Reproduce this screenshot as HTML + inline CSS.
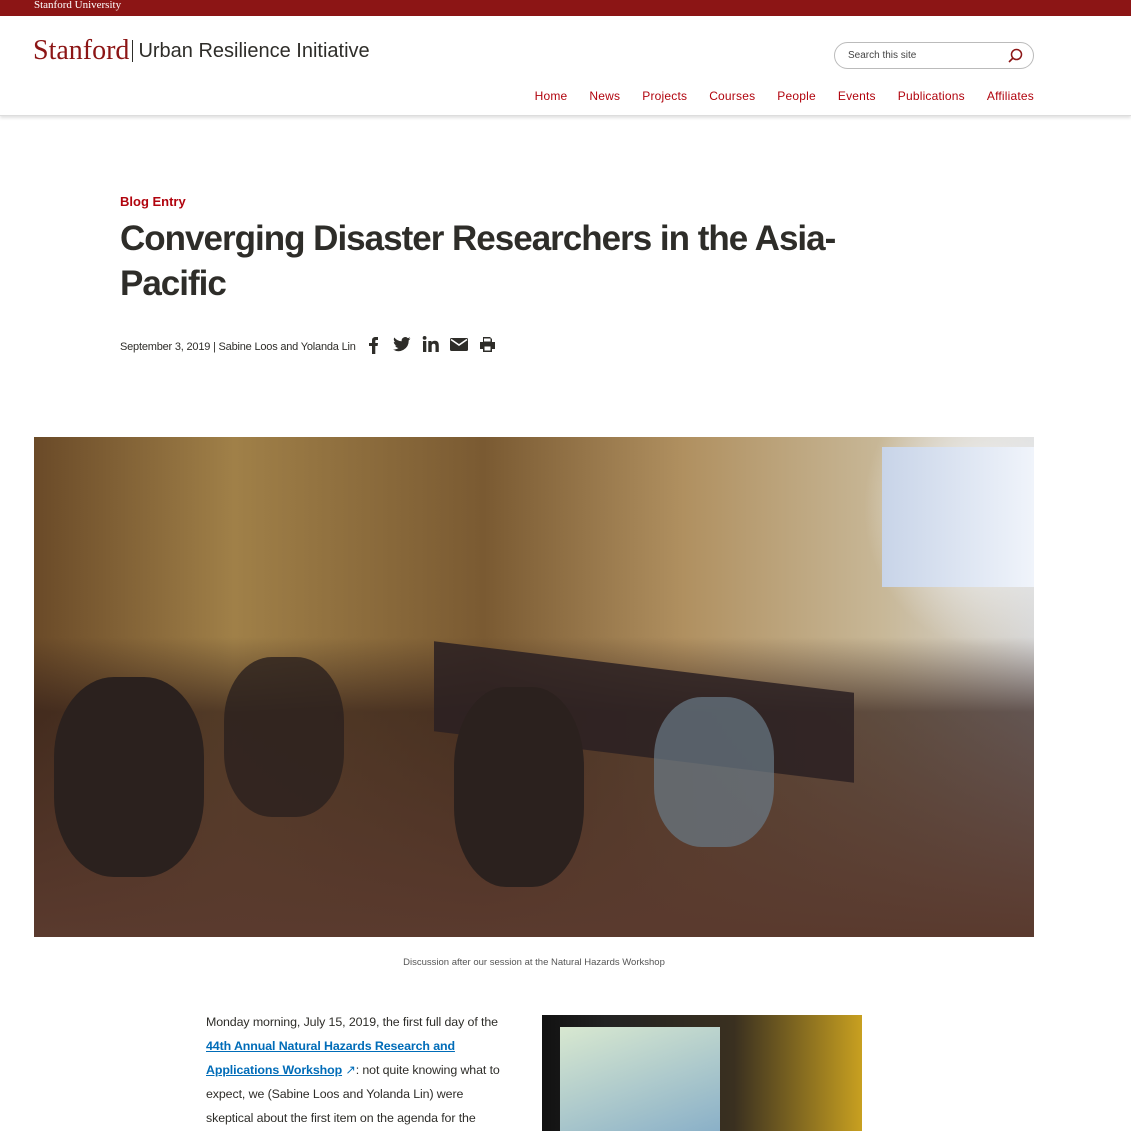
<!DOCTYPE html>
<html><head><meta charset="utf-8"><style>
*{margin:0;padding:0;box-sizing:border-box}
body{width:1131px;height:1131px;overflow:hidden;background:#fff;font-family:"Liberation Sans",sans-serif;color:#2e2d29}
.top{height:16px;background:#8c1515;color:#fff;font-family:"Liberation Serif",serif;font-size:11px;padding-left:34px;line-height:10px}
.hdr{height:100px;position:relative;border-bottom:1px solid #ddd;box-shadow:0 2px 3px rgba(0,0,0,.12)}
.logo{position:absolute;left:33px;top:19px;font-family:"Liberation Serif",serif;color:#8c1515;font-size:28px}
.logo span{font-family:"Liberation Sans",sans-serif;color:#2e2d29;font-size:20px;border-left:1px solid #2e2d29;padding-left:5px;margin-left:3px;position:relative;top:-2px}
.search{position:absolute;left:834px;top:26px;width:200px;height:27px;border:1px solid #bbb;border-radius:14px;font-size:10px;color:#444;padding:7px 13px}
.nav{position:absolute;right:97px;top:73px;font-size:12px;color:#b1040e;letter-spacing:.2px}
.nav a{margin-left:22px}
.nav a:first-child{margin-left:0}
.kick{position:absolute;left:120px;top:194px;color:#b1040e;font-size:13px;font-weight:bold}
h1{position:absolute;left:120px;top:216px;width:760px;font-size:35px;line-height:45px;font-weight:bold;letter-spacing:-1px}
.meta{position:absolute;left:120px;top:341px;font-size:11px;letter-spacing:-.2px}
.icons{position:absolute;left:368px;top:336px;display:flex;gap:11px}
.photo{position:absolute;left:34px;top:437px;width:1000px;height:500px;background:
radial-gradient(ellipse 120px 140px at 950px 70px,#f4f6f8,rgba(240,240,240,0) 100%),
linear-gradient(180deg,rgba(0,0,0,0) 0,rgba(0,0,0,0) 40%,rgba(50,30,25,.7) 55%,#5a3a2e 100%),
linear-gradient(90deg,#6a4a28 0,#a08048 20%,#7a5a32 45%,#b09060 65%,#c8b898 85%,#d8d8d8 100%);overflow:hidden}
.screen{position:absolute;left:848px;top:10px;width:152px;height:140px;background:linear-gradient(90deg,#c8d4e8,#f0f4fb)}
.table{position:absolute;left:400px;top:230px;width:420px;height:90px;background:#2a2022;transform:skewY(7deg);opacity:.85}
.p{position:absolute;border-radius:40%;background:#2b211e}
.cap{position:absolute;left:34px;width:1000px;top:957px;text-align:center;font-size:9.5px;color:#555}
.body{position:absolute;left:206px;top:1010px;width:300px;font-size:12.4px;line-height:24px;letter-spacing:-.1px}
.body a{color:#006cb8;font-weight:bold;text-decoration:underline}
.p2{position:absolute;left:542px;top:1015px;width:320px;height:116px;background:linear-gradient(90deg,#111 0,#222 20%,#3a3020 60%,#c8a020 100%)}
.sl{position:absolute;left:18px;top:12px;width:160px;height:104px;background:linear-gradient(160deg,#d8e8d0,#8ab0c8)}
</style></head><body>
<div class="top">Stanford University</div>
<div class="hdr">
<div class="logo">Stanford<span>Urban Resilience Initiative</span></div>
<div class="search">Search this site<svg style="position:absolute;right:10px;top:5px" width="16" height="16" viewBox="0 0 16 16"><circle cx="9.5" cy="6.5" r="5" fill="none" stroke="#8c1515" stroke-width="1.5"/><path d="M6 10L2 14" stroke="#8c1515" stroke-width="1.6"/></svg></div>
<div class="nav"><a>Home</a><a>News</a><a>Projects</a><a>Courses</a><a>People</a><a>Events</a><a>Publications</a><a>Affiliates</a></div>
</div>
<div class="kick">Blog Entry</div>
<h1>Converging Disaster Researchers in the Asia-Pacific</h1>
<div class="meta">September 3, 2019 | Sabine Loos and Yolanda Lin</div>
<div class="icons">
<svg width="14" height="18" viewBox="0 0 14 18"><path d="M4 18V10H1V7H4V4.5C4 2 5.5 1 7.5 1H10V4H8.3C7.5 4 7.3 4.4 7.3 5V7H10L9.6 10H7.3V18Z" fill="#2e2d29"/></svg>
<svg width="18" height="16" viewBox="0 0 18 16"><path d="M17.5 2.5c-.6.3-1.3.5-2 .6.7-.5 1.3-1.1 1.5-1.9-.7.4-1.4.7-2.2.9A3.6 3.6 0 0 0 8.7 5.3 10 10 0 0 1 1.3 1.5a3.6 3.6 0 0 0 1.1 4.8c-.6 0-1.1-.2-1.6-.4 0 1.7 1.2 3.2 2.9 3.5-.5.2-1.1.2-1.6.1.5 1.4 1.8 2.5 3.4 2.5A7.2 7.2 0 0 1 0 13.5 10.2 10.2 0 0 0 15.7 4.9v-.5c.7-.5 1.3-1.1 1.8-1.9z" fill="#2e2d29"/></svg>
<svg width="17" height="16" viewBox="0 0 17 16"><path d="M1 5h3.3v11H1zM2.6 0a1.9 1.9 0 1 1 0 3.8 1.9 1.9 0 0 1 0-3.8zM6.3 5h3.2v1.5C10 5.6 11.1 4.8 12.8 4.8 16.2 4.8 16.8 7 16.8 10v6h-3.3v-5.3c0-1.3 0-2.9-1.8-2.9s-2 1.4-2 2.8V16H6.3z" fill="#2e2d29"/></svg>
<svg width="18" height="16" viewBox="0 0 18 16"><rect x="0" y="2" width="18" height="13" rx="1.5" fill="#2e2d29"/><path d="M1 3.5L9 9l8-5.5" stroke="#fff" stroke-width="1.6" fill="none"/></svg>
<svg width="17" height="17" viewBox="0 0 17 17"><path d="M4 1h7l2 2v3H4z M1 6h15v7h-3v3H4v-3H1z" fill="#2e2d29"/><rect x="5.5" y="10.5" width="6" height="4" fill="#fff"/><rect x="5" y="2.5" width="6.5" height="3" fill="#fff"/></svg>
</div>
<div class="photo"><div class="screen"></div><div class="table"></div>
<div class="p" style="left:20px;top:240px;width:150px;height:200px"></div>
<div class="p" style="left:190px;top:220px;width:120px;height:160px;opacity:.8"></div>
<div class="p" style="left:420px;top:250px;width:130px;height:200px"></div>
<div class="p" style="left:620px;top:260px;width:120px;height:150px;background:#6a7a88;opacity:.7"></div>
</div>
<div class="cap">Discussion after our session at the Natural Hazards Workshop</div>
<div class="body">Monday morning, July 15, 2019, the first full day of the <a>44th Annual Natural Hazards Research and Applications Workshop</a> <span style="color:#006cb8">↗</span>: not quite knowing what to expect, we (Sabine Loos and Yolanda Lin) were skeptical about the first item on the agenda for the</div>
<div class="p2"><div class="sl"></div></div>
</body></html>
